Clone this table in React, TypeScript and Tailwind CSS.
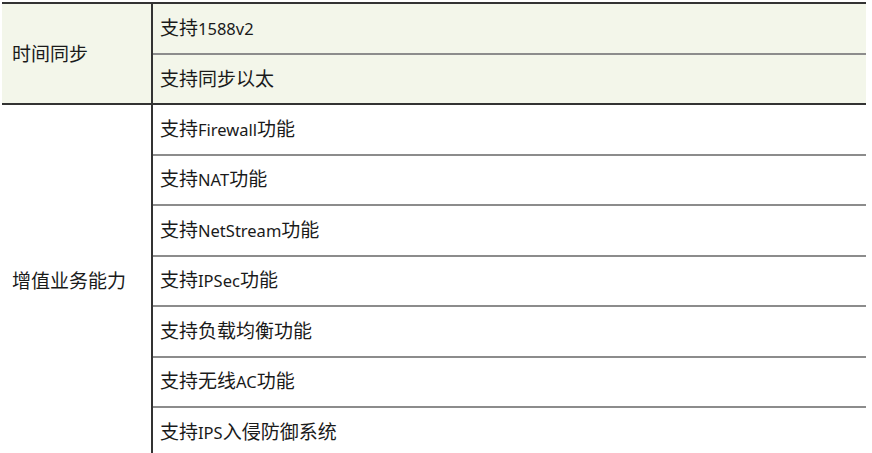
import React from "react"

const GROUPS: { title: string; bg: string; items: string[] }[] = [
  { title: "时间同步", bg: "bg-[#f3f6ea]", items: ["支持1588v2", "支持同步以太"] },
  {
    title: "增值业务能力",
    bg: "bg-white",
    items: [
      "支持Firewall功能",
      "支持NAT功能",
      "支持NetStream功能",
      "支持IPSec功能",
      "支持负载均衡功能",
      "支持无线AC功能",
      "支持IPS入侵防御系统",
    ],
  },
]

// latin runs sit a little smaller next to the CJK glyphs, like YaHei does
function Label({ text }: { text: string }) {
  return (
    <>
      {text.split(/([A-Za-z0-9]+)/).map((part, i) =>
        /^[A-Za-z0-9]+$/.test(part) ? (
          <span key={i} className="text-[16.5px]">
            {part}
          </span>
        ) : (
          <span key={i}>{part}</span>
        )
      )}
    </>
  )
}

export default function App() {
  return (
    <div
      className="w-[872px] h-[453px] overflow-hidden bg-white pt-[2px] pl-[2px] text-[19px] leading-[24px] text-[#1a1a1a]"
      style={{ fontFamily: '"Noto Sans", "Noto Sans CJK SC", sans-serif' }}
    >
      <table className="w-[864px] border-collapse">
        <tbody>
          {GROUPS.map((g) =>
            g.items.map((item, i) => (
              <tr key={item} className={g.bg}>
                {i === 0 && (
                  <td
                    rowSpan={g.items.length}
                    className="w-[150px] border-t-2 border-r-2 border-t-[#333] border-r-[#333] pl-[10px] align-middle"
                  >
                    {g.title}
                  </td>
                )}
                <td
                  className={`h-[50.5px] pl-[7px] align-middle border-t-2 ${
                    i === 0 ? "border-t-[#333]" : "border-t-[#8c8c8c]"
                  }`}
                >
                  <Label text={item} />
                </td>
              </tr>
            ))
          )}
        </tbody>
      </table>
    </div>
  )
}
